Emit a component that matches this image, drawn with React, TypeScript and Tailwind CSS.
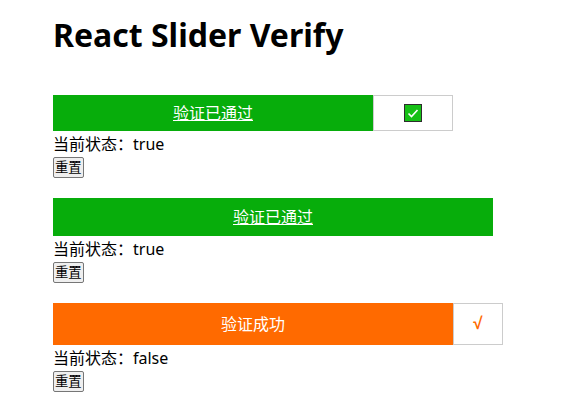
import React, { useState } from 'react';

const font = "font-['Segoe_UI','Noto_Sans','Noto_Sans_CJK_SC',sans-serif]";

const CheckIcon: React.FC = () => (
  <svg width="18" height="18" viewBox="0 0 18 18">
    <rect x="0.5" y="0.5" width="17" height="17" fill="#16c016" stroke="#2d2d2d" />
    <path d="M4.5 9.5 L7.5 12.5 L13.5 6" fill="none" stroke="#ffffff" strokeWidth="1.6" />
  </svg>
);

interface IStatusProps {
  value: boolean;
  onReset: () => void;
}

const Status: React.FC<IStatusProps> = ({ value, onReset }) => (
  <div>
    <p className="text-[16px] leading-[26px] text-black">当前状态：{String(value)}</p>
    <button
      onClick={onReset}
      className="block h-[21px] px-[1px] text-[13.33px] leading-[17px] bg-[#efefef] border border-[#767676] rounded-[2px] text-black"
    >
      重置
    </button>
  </div>
);

const App: React.FC = () => {
  const [first, setFirst] = useState(true);
  const [second, setSecond] = useState(true);
  const [third, setThird] = useState(false);

  return (
    <div className={`${font} bg-white w-[570px] h-[409px] pl-[53px] pt-[14px]`}>
      <h1 className="text-[32px] leading-[42px] font-bold text-black mb-[39px]">
        React Slider Verify
      </h1>

      <div>
        <div className="flex w-[400px] h-[36px]">
          <div className="w-[320px] bg-[#07ad0b] flex items-center justify-center text-white text-[16px] underline">
            验证已通过
          </div>
          <div className="w-[80px] border border-[#cccccc] flex items-center justify-center">
            <CheckIcon />
          </div>
        </div>
        <Status value={first} onReset={() => setFirst(!first)} />
      </div>

      <div className="mt-[20px]">
        <div className="w-[440px] h-[38px] bg-[#07ad0b] flex items-center justify-center text-white text-[16px] underline">
          验证已通过
        </div>
        <Status value={second} onReset={() => setSecond(!second)} />
      </div>

      <div className="mt-[20px]">
        <div className="flex w-[450px] h-[42px]">
          <div className="w-[400px] bg-[#ff6a00] flex items-center justify-center text-white text-[16px]">
            验证成功
          </div>
          <div className="w-[50px] border border-[#cccccc] flex items-center justify-center text-[#ff6a00] text-[17px] font-bold font-['Liberation_Sans',sans-serif]">
            √
          </div>
        </div>
        <Status value={third} onReset={() => setThird(!third)} />
      </div>
    </div>
  );
};

export default App;
